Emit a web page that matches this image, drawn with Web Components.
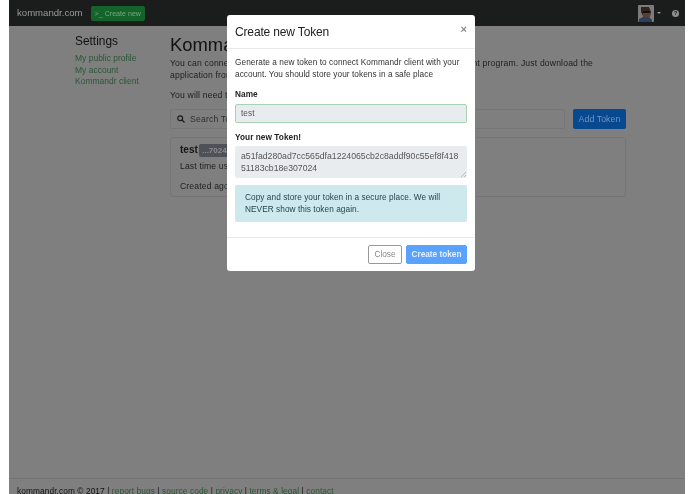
<!DOCTYPE html>
<html lang="en"><head><meta charset="utf-8"><title>Tokens</title>
<style>
html,body{margin:0;padding:0;background:#fff;height:100%;overflow:hidden}
body{font:8.6px/12px "Liberation Sans",Arial,sans-serif;color:#1e1e1e}
</style></head><body>
<k-app></k-app>
<script>
function def(name, css, html){
  customElements.define(name, class extends HTMLElement{
    constructor(){super();const r=this.attachShadow({mode:'open'});r.innerHTML='<style>'+css+'</style>'+html;}
  });
}
def('k-navbar',`
:host{display:flex;align-items:center;height:26px;background:#1b1c1c;padding:0 6px 0 8px;box-sizing:border-box;flex:none}
.brand{font-size:9.6px;color:#9a9a9a;margin-right:8px}
.new{background:#14632a;color:#7aa583;font-size:7px;height:15px;line-height:15px;padding:0 4px;border-radius:2px;letter-spacing:.05px;white-space:nowrap}
.sp{flex:1}
svg{display:block}
.caret{width:0;height:0;border:2px solid transparent;border-top-color:#999;border-bottom:0;margin:0 11px 0 3px}
.help{width:7px;height:7px;border-radius:50%;background:#8f8f8f;color:#1b1c1c;font:bold 6px/7px "Liberation Sans",sans-serif;text-align:center}
`,`<span class="brand">kommandr.com</span><span class="new">&gt;_ Create new</span><span class="sp"></span>
<svg width="16" height="17" viewBox="0 0 16 17"><rect width="16" height="17" rx="1" fill="#7d7a78"/><path d="M3 2h8l2 5-1 4H5L3 7z" fill="#2e2420"/><rect x="5" y="6" width="7" height="2" fill="#111"/><path d="M5 8h7v4H5z" fill="#5f3d33"/><path d="M1 17v-3l4-2h6l3 3v2z" fill="#28405a"/></svg>
<span class="caret"></span><span class="help">?</span>`);
def('k-sidebar',`
:host{display:block;width:95px;flex:none;margin-top:-1px}
h2{font:normal 11.9px/14px "Liberation Sans",Arial,sans-serif;color:#111;margin:0 0 5px}
a{display:block;color:#2c5636;line-height:11.6px;font-size:8.5px}
`,`<h2>Settings</h2><a>My public profile</a><a>My account</a><a>Kommandr client</a>`);
def('k-token-card',`
:host{display:block;border:1px solid #757575;border-radius:3px;height:60px;box-sizing:border-box;padding:6px 9px;margin-top:8px}
b{font-size:10px;line-height:12px;color:#161616}
.badge{background:#4e5258;color:#8a8d91;font-weight:bold;font-size:8px;padding:2px 3px;border-radius:2px;margin-left:-1px}
p{margin:3px 0 8px;line-height:12px;letter-spacing:.15px}
`,`<div><b>test</b> <span class="badge">...7024</span></div><p>Last time used</p><p>Created ago</p>`);
def('k-search',`
:host{display:flex;gap:8px;height:20px;margin-top:8px}
.box{flex:1;border:1px solid #767676;border-radius:2px;display:flex;align-items:center;padding-left:6px;gap:5px;letter-spacing:.2px;color:#2f2f2f}
.btn{width:53px;background:#07488f;color:#6f95bf;border-radius:2px;text-align:center;line-height:20px;font-size:8.7px;letter-spacing:.1px}
svg{display:block}
`,`<div class="box"><svg width="8" height="8" viewBox="0 0 8 8" fill="none" stroke="#1c1c1c" stroke-width="1.2"><circle cx="3.2" cy="3.2" r="2.4"/><path d="M5 5l2.5 2.5"/></svg><span>Search Tokens</span></div><div class="btn">Add Token</div>`);
def('k-content',`
:host{display:block;flex:1;min-width:0}
h1{font:normal 18.4px/20px "Liberation Sans",Arial,sans-serif;color:#111;margin:0 0 2px}
p{margin:0;line-height:12px;letter-spacing:.17px;color:#1e1e1e;white-space:nowrap}
.gap{margin-top:8px}
`,`<h1>Kommandr client</h1>
<p>You can connect your new Kommandr client with all your favorite development program. Just download the<br>application from our website and log in.</p>
<p class="gap">You will need to create a token first.</p>
<k-search></k-search><k-token-card></k-token-card>`);
def('k-footer',`
:host{display:block;border-top:1px solid #737373;height:16px;box-sizing:border-box;padding:5.5px 8px 0;flex:none;font-size:8.3px;line-height:12px;color:#141414;white-space:nowrap;letter-spacing:.1px}
a{color:#2c5636}
`,`kommandr.com © 2017 | <a>report bugs</a> | <a>source code</a> | <a>privacy</a> | <a>terms &amp; legal</a> | <a>contact</a>`);
def('k-modal',`
:host{position:absolute;left:218px;top:15px;width:248px;height:256px;background:#fff;border-radius:3px;display:flex;flex-direction:column;box-sizing:border-box;color:#333;font-size:8.25px}
header{height:34px;border-bottom:1px solid #e9e9e9;display:flex;align-items:center;justify-content:space-between;padding:0 8px;flex:none;box-sizing:border-box}
h3{margin:1px 0 0;font:normal 12px/16px "Liberation Sans",Arial,sans-serif;color:#222;letter-spacing:-.15px}
.x{font:bold 11px/11px "Liberation Sans",sans-serif;color:#8a8a8a;margin:-4px 0 0}
main{flex:1;padding:8px 8px 0;letter-spacing:.06px}
p{margin:0;line-height:12px}
label{display:block;font-weight:bold;color:#222;line-height:12px}
.l1{margin-top:8px}.l2{margin-top:9px}
.f{background:#e9ecef;border-radius:2px;color:#555;box-sizing:border-box}
.in{height:19px;line-height:17px;border:1px solid #a8d2b3;padding:0 5px;margin-top:3px}
.ta{height:32px;padding:4px 7px 4px 6px;margin-top:2px;line-height:12px;position:relative;word-break:break-all;font-size:8.7px;letter-spacing:0}
.ta svg{position:absolute;right:1px;bottom:1px}
.info{background:#cde9ee;color:#24464d;border-radius:2px;height:37px;margin-top:7px;padding:7px 10px;box-sizing:border-box}
footer{height:34px;border-top:1px solid #e9e9e9;display:flex;justify-content:flex-end;align-items:flex-start;gap:4px;padding:7px 8px 0;box-sizing:border-box;flex:none}
.b{height:19px;line-height:17px;border-radius:2px;box-sizing:border-box;text-align:center}
.c{width:34px;border:1px solid #999;color:#888}
.p{width:61px;background:#5aa2ff;color:#e4f0ff;border:1px solid #5aa2ff;font-weight:bold}
`,`<header><h3>Create new Token</h3><span class="x">×</span></header>
<main><p>Generate a new token to connect Kommandr client with your account. You should store your tokens in a safe place</p>
<label class="l1">Name</label><div class="f in">test</div>
<label class="l2">Your new Token!</label>
<div class="f ta">a51fad280ad7cc565dfa1224065cb2c8addf90c55ef8f41851183cb18e307024<svg width="5" height="5" viewBox="0 0 5 5" stroke="#999" stroke-width=".6"><path d="M0 5L5 0M3 5L5 3"/></svg></div>
<div class="info">Copy and store your token in a secure place. We will NEVER show this token again.</div></main>
<footer><div class="b c">Close</div><div class="b p">Create token</div></footer>`);
def('k-app',`
:host{display:flex;flex-direction:column;position:relative;margin-left:9px;width:676px;height:494px;background:#7f7f7f;overflow:hidden;filter:blur(.3px)}
.row{flex:1;display:flex;padding:9px 59px 0 66px;min-height:0}
`,`<k-navbar></k-navbar>
<div class="row"><k-sidebar></k-sidebar><k-content></k-content></div>
<k-footer></k-footer>
<k-modal></k-modal>`);
</script></body></html>
